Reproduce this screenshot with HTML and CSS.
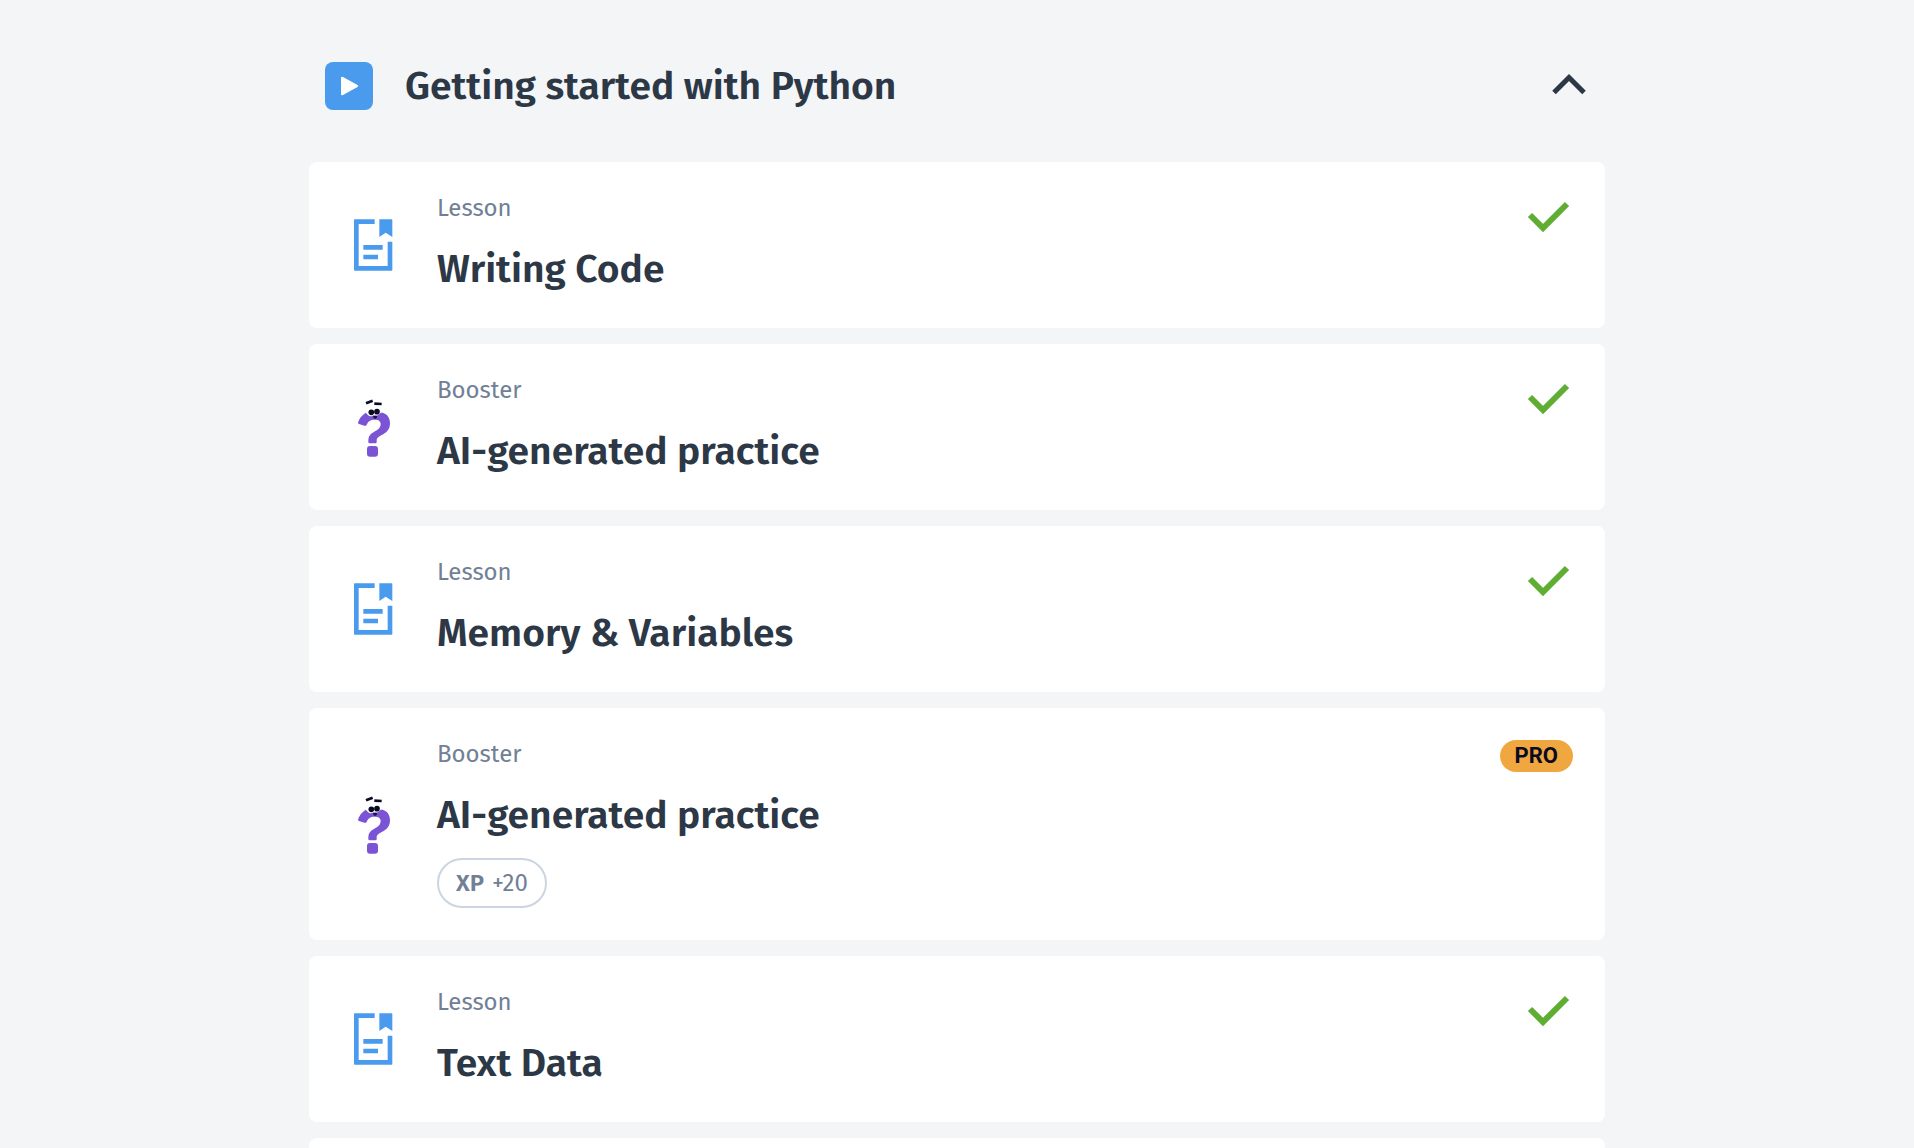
FILE: index.html
```html
<!DOCTYPE html>
<html lang="en">
<head>
<meta charset="utf-8">
<title>Getting started with Python</title>
<link rel="stylesheet" href="styles.css">
</head>
<body>
<svg class="sprite" aria-hidden="true">
  <symbol id="lesson" viewBox="6 39 192 192">
    <path fill="#4a9bed" d="M45 60q0-2 2-2h60v14H59v126h87v-73h14v85q0 2-2 2H47q-2 0-2-2zM121 58h37q2 0 2 2v51l-20-13-19 13zM73 135h58v14H73zM73 164h44v14H73z"/>
  </symbol>
  <symbol id="booster" viewBox="6 15 192 192">
    <path fill="#7b54d6" d="M57 98C60 86 68 76 80 68L86 74C92 80 98 80 104 76C112 78 120 76 125 68L131 68C145 73 153 83 153 99C153 117 145 125 134 132C122 139 112 142 113 153V157Q113 160 110 160H92Q88 160 88 156C88 142 90 136 100 129C113 121 125 116 125 102C125 93 118 89 107 89C93 89 87 95 83 104Q81 109 76 107L60 102Q57 101 57 98ZM93 168H108Q117 168 117 177V191Q117 200 108 200H93Q84 200 84 191V177Q84 168 93 168Z"/>
    <g fill="#0a0a23"><circle cx="97" cy="67" r="8.500"/><circle cx="114" cy="65" r="8.500"/><path d="M102 79Q108 76 115 79Q114 87 108 87Q102 86 102 79Z" opacity=".85"/></g>
    <path fill="none" stroke="#0a0a23" stroke-width="8" d="M81 40L101 32M106 41L128 42"/>
  </symbol>
  <symbol id="check" viewBox="0 0 48 48">
    <path fill="none" stroke="#5fad33" stroke-width="6" stroke-linejoin="miter" d="M5 21L18 34L42 10"/>
  </symbol>
</svg>
<main class="course">
  <section class="chapter">
    <h2 class="chapter-heading">
      <button class="chapter-toggle" type="button" aria-expanded="true" aria-controls="chapter-items">
        <svg class="chapter-icon" viewBox="0 0 48 48" aria-hidden="true"><rect width="48" height="48" rx="8" fill="#4a9bed"/><path d="M16 16Q16 14 18 15L32.500 23Q34 24 32.500 25L18 33Q16 34 16 32Z" fill="#fff"/></svg>
        <span class="chapter-title">Getting started with Python</span>
        <svg class="chevron" viewBox="0 0 40 40" aria-hidden="true"><path d="M5 26.500L20 11.500L35 26.500" fill="none" stroke="#2d3846" stroke-width="5"/></svg>
      </button>
    </h2>
    <ul class="items" id="chapter-items">
      <li><a class="card" href="#">
        <svg class="card-icon" aria-hidden="true"><use href="#lesson"/></svg>
        <span class="card-body"><span class="card-type">Lesson</span><span class="card-title">Writing Code</span></span>
        <svg class="check" role="img" aria-label="Completed"><use href="#check"/></svg>
      </a></li>
      <li><a class="card" href="#">
        <svg class="card-icon" aria-hidden="true"><use href="#booster"/></svg>
        <span class="card-body"><span class="card-type">Booster</span><span class="card-title">AI-generated practice</span></span>
        <svg class="check" role="img" aria-label="Completed"><use href="#check"/></svg>
      </a></li>
      <li><a class="card" href="#">
        <svg class="card-icon" aria-hidden="true"><use href="#lesson"/></svg>
        <span class="card-body"><span class="card-type">Lesson</span><span class="card-title">Memory &amp; Variables</span></span>
        <svg class="check" role="img" aria-label="Completed"><use href="#check"/></svg>
      </a></li>
      <li><a class="card" href="#">
        <svg class="card-icon" aria-hidden="true"><use href="#booster"/></svg>
        <span class="card-body"><span class="card-type">Booster</span><span class="card-title">AI-generated practice</span><span class="xp"><b>XP</b><span>+20</span></span></span>
        <span class="pro">PRO</span>
      </a></li>
      <li><a class="card" href="#">
        <svg class="card-icon" aria-hidden="true"><use href="#lesson"/></svg>
        <span class="card-body"><span class="card-type">Lesson</span><span class="card-title">Text Data</span></span>
        <svg class="check" role="img" aria-label="Completed"><use href="#check"/></svg>
      </a></li>
      <li class="card card-pending"></li>
    </ul>
  </section>
</main>
</body>
</html>
```
FILE: styles.css
```css
*, *::before, *::after { box-sizing: border-box; }
body {
  margin: 0;
  background: #f3f5f7;
  color: #2d3846;
  font-family: "Fira Sans", "Noto Sans", sans-serif;
}
.sprite { display: none; }
.course { max-width: 1328px; margin: 0 auto; padding: 0 16px; }
.chapter-heading { margin: 0; font: inherit; }
.chapter-toggle {
  display: flex;
  align-items: center;
  gap: 32px;
  width: 100%;
  padding: 62px 16px 52px;
  border: 0;
  background: none;
  color: inherit;
  font: inherit;
  text-align: left;
  cursor: pointer;
}
.chapter-icon { flex: none; width: 48px; height: 48px; }
.chapter-title { flex: 1; }
.chapter-title, .card-title { font-size: 39px; font-weight: 600; line-height: 48px; }
.chevron { flex: none; width: 40px; height: 40px; }
.items {
  display: flex;
  flex-direction: column;
  gap: 16px;
  margin: 0;
  padding: 0;
  list-style: none;
}
.card {
  display: flex;
  gap: 32px;
  padding: 32px;
  border-radius: 8px;
  background: #fff;
  color: inherit;
  text-decoration: none;
}
.card-pending { min-height: 166px; }
.card-icon { flex: none; align-self: center; width: 64px; height: 64px; }
.card-body { display: flex; flex: 1; flex-direction: column; align-items: flex-start; }
.card-type { margin-bottom: 20px; color: #718096; font-size: 24px; line-height: 28px; }
.card-title { line-height: 54px; }
.xp {
  display: flex;
  align-items: center;
  justify-content: center;
  gap: 8px;
  min-width: 110px;
  height: 50px;
  margin-top: 16px;
  padding: 0 16px;
  border: 2px solid #cbd5e0;
  border-radius: 25px;
  color: #718096;
  font-size: 24px;
  line-height: 28px;
}
.xp b { font-weight: 600; }
.check { flex: none; width: 48px; height: 48px; }
.pro {
  align-self: flex-start;
  padding: 0 15px;
  border-radius: 16px;
  background: #f1a73f;
  color: #0a0a23;
  font: 700 22px/32px Roboto, sans-serif;
}
```
